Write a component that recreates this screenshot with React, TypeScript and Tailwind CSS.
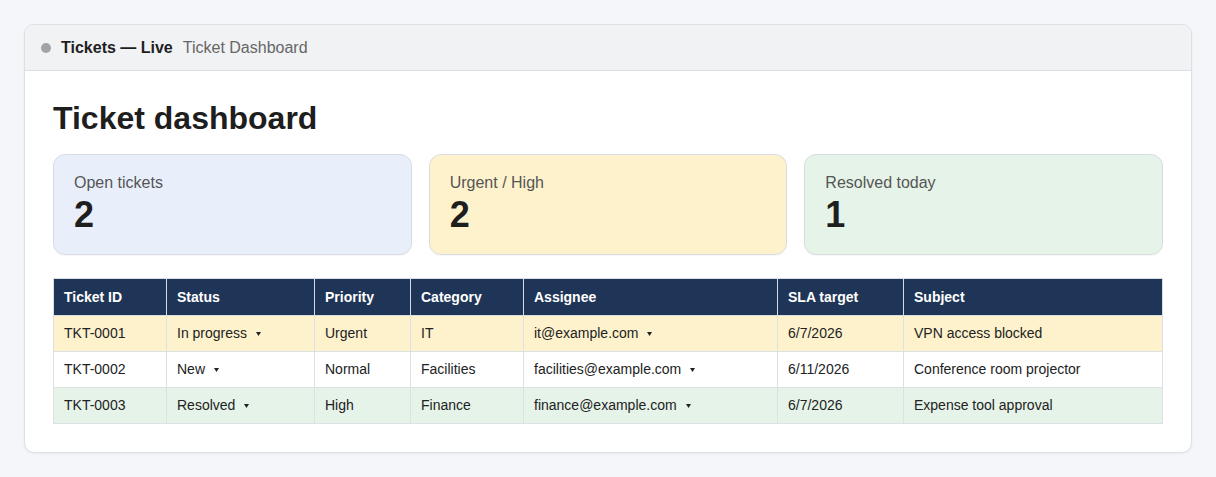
const stats = [
  { label: "Open tickets", value: "2", tone: "bg-[#e8effb]" },
  { label: "Urgent / High", value: "2", tone: "bg-[#fef2cd]" },
  { label: "Resolved today", value: "1", tone: "bg-[#e6f3e8]" },
];

const tickets = [
  {
    id: "TKT-0001",
    status: "In progress",
    priority: "Urgent",
    category: "IT",
    assignee: "it@example.com",
    sla: "6/7/2026",
    subject: "VPN access blocked",
    row: "bg-[#fef2cd]",
  },
  {
    id: "TKT-0002",
    status: "New",
    priority: "Normal",
    category: "Facilities",
    assignee: "facilities@example.com",
    sla: "6/11/2026",
    subject: "Conference room projector",
    row: "bg-white",
  },
  {
    id: "TKT-0003",
    status: "Resolved",
    priority: "High",
    category: "Finance",
    assignee: "finance@example.com",
    sla: "6/7/2026",
    subject: "Expense tool approval",
    row: "bg-[#e6f3e8]",
  },
];

const headers = ["Ticket ID", "Status", "Priority", "Category", "Assignee", "SLA target", "Subject"];

function Caret() {
  return (
    <svg width="5" height="4" viewBox="0 0 5 4" className="ml-[9px] inline-block align-middle">
      <polygon points="0,0 5,0 2.5,4" fill="#222" />
    </svg>
  );
}

function Dropdown({ value }: { value: string }) {
  return (
    <span className="inline-flex items-center">
      {value}
      <Caret />
    </span>
  );
}

function App() {
  return (
    <div className="min-h-screen bg-[#f5f6f9] p-6 font-['Liberation_Sans',Arial,sans-serif] text-[#222]">
      <div className="overflow-hidden rounded-[10px] border border-[#dcdfe4] bg-white shadow-[0_1px_3px_rgba(0,0,0,0.05)]">
        <div className="flex h-[46px] items-center gap-[10px] border-b border-[#d9dce1] bg-[#f1f2f4] px-4 text-base leading-6">
          <span className="h-[10px] w-[10px] rounded-full bg-[#a0a3a8]" />
          <span className="font-bold text-[#1e1e1e]">Tickets — Live</span>
          <span className="text-[#666]">Ticket Dashboard</span>
        </div>

        <div className="px-7 pt-7 pb-7">
          <h1 className="mb-[17px] text-[32px] font-bold leading-[38px] text-[#1e1e1e]">Ticket dashboard</h1>

          <div className="grid grid-cols-3 gap-[17px]">
            {stats.map((s) => (
              <div
                key={s.label}
                className={`rounded-xl border border-[#d8dce2] px-5 pt-4 pb-[19px] shadow-[0_1px_2px_rgba(0,0,0,0.04)] ${s.tone}`}
              >
                <div className="text-base leading-6 text-[#555]">{s.label}</div>
                <div className="text-[36px] font-bold leading-[40px] text-[#1e1e1e]">{s.value}</div>
              </div>
            ))}
          </div>

          <table className="mt-[23px] w-full table-fixed border-collapse text-sm">
            <colgroup>
              <col className="w-[113px]" />
              <col className="w-[148px]" />
              <col className="w-[96px]" />
              <col className="w-[113px]" />
              <col className="w-[254px]" />
              <col className="w-[126px]" />
              <col />
            </colgroup>
            <thead>
              <tr className="bg-[#1f3558]">
                {headers.map((h) => (
                  <th
                    key={h}
                    className="border border-[#d9dde3] px-[10px] py-2 text-left font-bold leading-5 text-white"
                  >
                    {h}
                  </th>
                ))}
              </tr>
            </thead>
            <tbody>
              {tickets.map((t) => (
                <tr key={t.id} className={t.row}>
                  <td className="border border-[#dde0e5] px-[10px] py-2 leading-[19px]">{t.id}</td>
                  <td className="border border-[#dde0e5] px-[10px] py-2 leading-[19px]">
                    <Dropdown value={t.status} />
                  </td>
                  <td className="border border-[#dde0e5] px-[10px] py-2 leading-[19px]">{t.priority}</td>
                  <td className="border border-[#dde0e5] px-[10px] py-2 leading-[19px]">{t.category}</td>
                  <td className="border border-[#dde0e5] px-[10px] py-2 leading-[19px]">
                    <Dropdown value={t.assignee} />
                  </td>
                  <td className="border border-[#dde0e5] px-[10px] py-2 leading-[19px]">{t.sla}</td>
                  <td className="border border-[#dde0e5] px-[10px] py-2 leading-[19px]">{t.subject}</td>
                </tr>
              ))}
            </tbody>
          </table>
        </div>
      </div>
    </div>
  );
}

export default App;
